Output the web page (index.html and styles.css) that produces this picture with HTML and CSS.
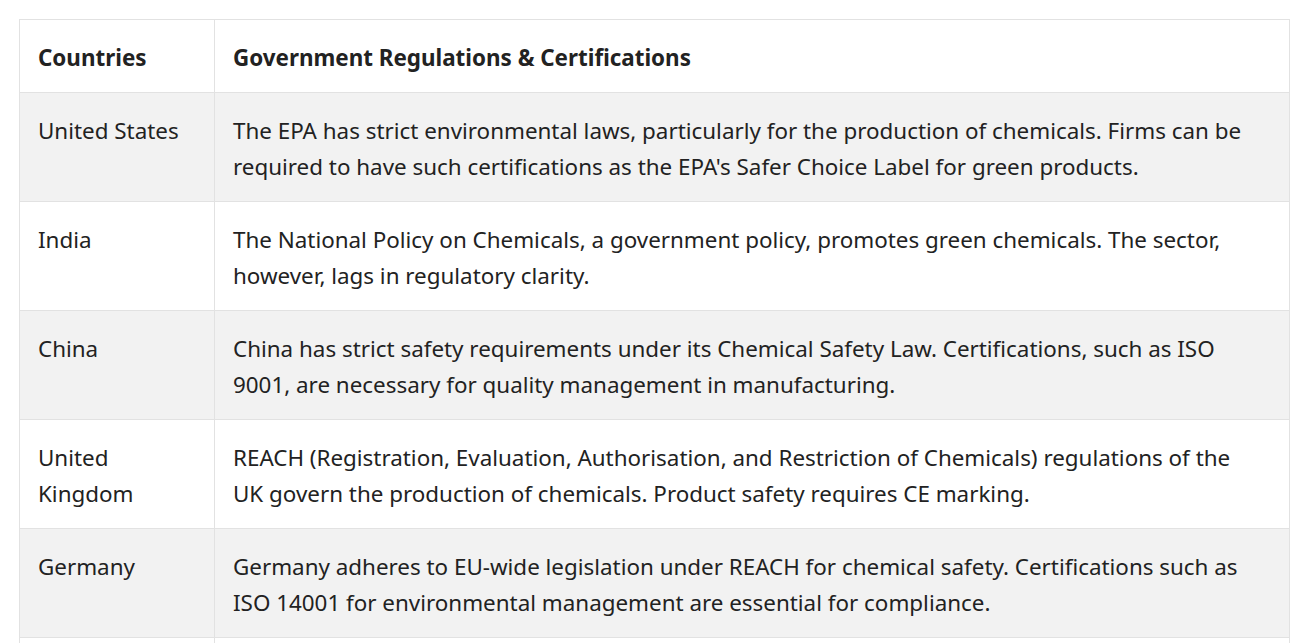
FILE: index.html
```html
<!DOCTYPE html>
<html lang="en">
<head>
<meta charset="utf-8">
<title>Government Regulations &amp; Certifications</title>
<link rel="stylesheet" href="styles.css">
</head>
<body>
<div class="wrap">
  <table class="reg-table">
    <colgroup>
      <col class="col-country">
      <col class="col-detail">
    </colgroup>
    <thead>
      <tr>
        <th>Countries</th>
        <th>Government Regulations &amp; Certifications</th>
      </tr>
    </thead>
    <tbody>
      <tr>
        <td>United States</td>
        <td>The EPA has strict environmental laws, particularly for the production of chemicals. Firms can be required to have such certifications as the EPA's Safer Choice Label for green products.</td>
      </tr>
      <tr>
        <td>India</td>
        <td>The National Policy on Chemicals, a government policy, promotes green chemicals. The sector, however, lags in regulatory clarity.</td>
      </tr>
      <tr>
        <td>China</td>
        <td>China has strict safety requirements under its Chemical Safety Law. Certifications, such as ISO 9001, are necessary for quality management in manufacturing.</td>
      </tr>
      <tr>
        <td>United Kingdom</td>
        <td>REACH (Registration, Evaluation, Authorisation, and Restriction of Chemicals) regulations of the UK govern the production of chemicals. Product safety requires CE marking.</td>
      </tr>
      <tr>
        <td>Germany</td>
        <td>Germany adheres to EU-wide legislation under REACH for chemical safety. Certifications such as ISO 14001 for environmental management are essential for compliance.</td>
      </tr>
      <tr class="row-more">
        <td>&nbsp;</td>
        <td>&nbsp;</td>
      </tr>
    </tbody>
  </table>
</div>
</body>
</html>
```
FILE: styles.css
```css
html, body {
  margin: 0;
  padding: 0;
  background: #ffffff;
}
body {
  font-family: "Noto Sans", "Open Sans", sans-serif;
  font-size: 22.4px;
  line-height: 36px;
  color: #222222;
}
.wrap {
  padding: 19px 24px 19px 19px;
}
.reg-table {
  border-collapse: collapse;
  table-layout: fixed;
  width: 1271px;
}
.col-country {
  width: 195px;
}
.reg-table th,
.reg-table td {
  border: 1px solid #e2e2e2;
  padding: 20px 32px 16px 18px;
  text-align: left;
  vertical-align: top;
}
.reg-table th {
  font-weight: 700;
}
.reg-table tbody tr:nth-child(odd) {
  background: #f2f2f2;
}
```
